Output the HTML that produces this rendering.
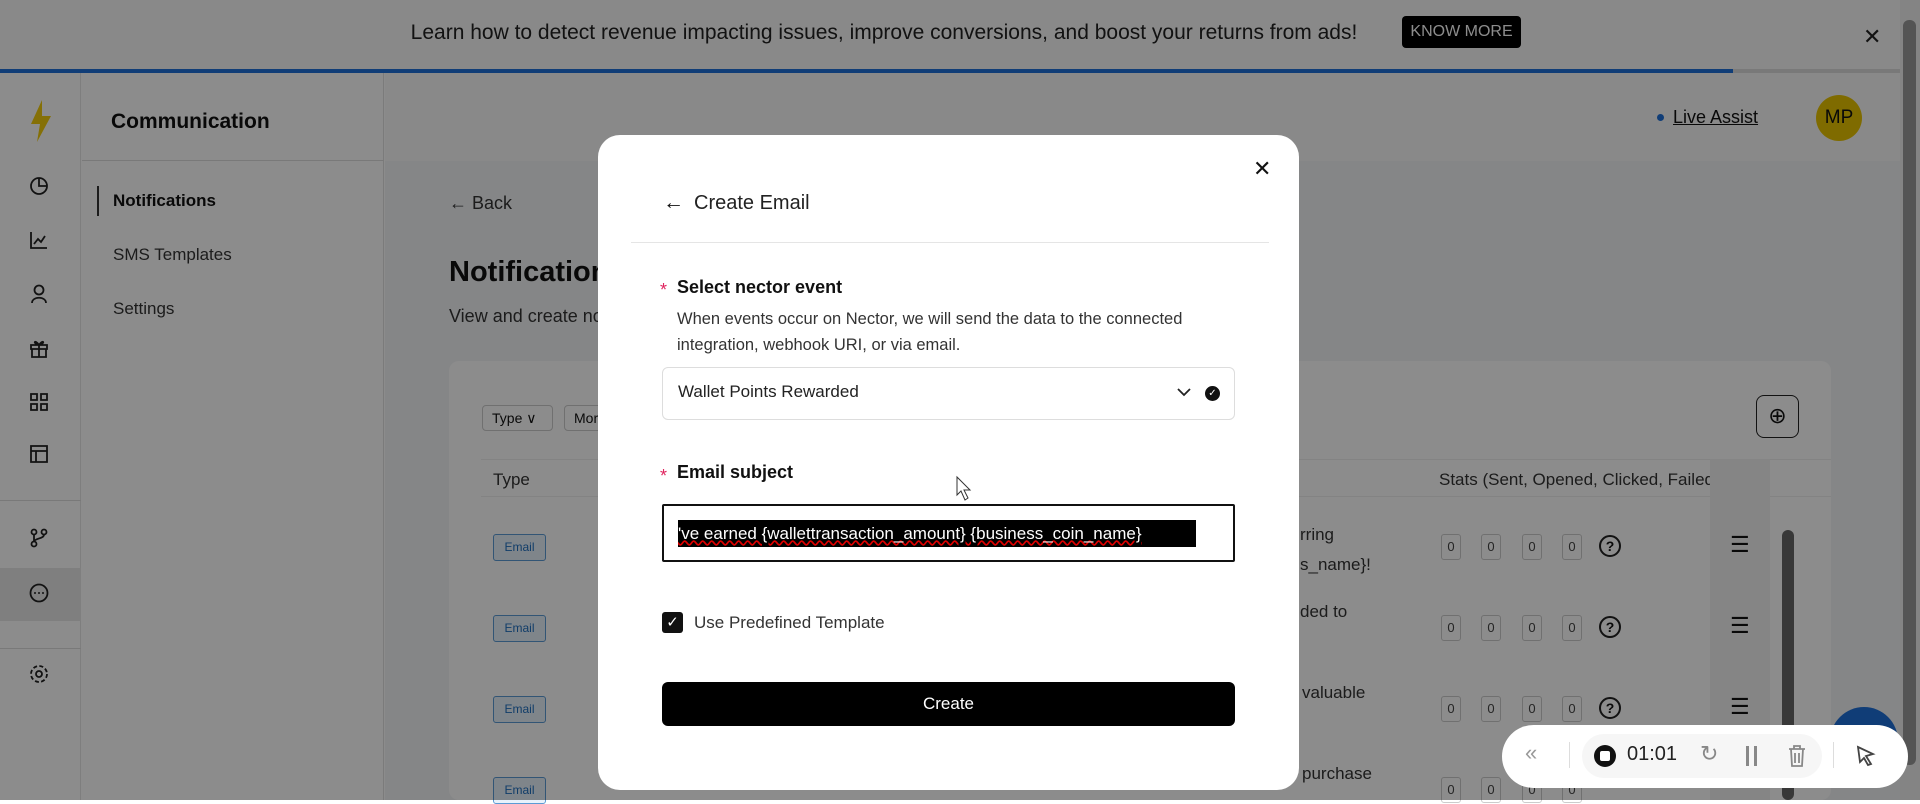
<!DOCTYPE html>
<html><head><meta charset="utf-8"><style>
*{box-sizing:border-box;margin:0;padding:0}
body{width:1920px;height:800px;overflow:hidden;position:relative;font-family:"Liberation Sans",sans-serif;background:#fff;color:#111}
.a{position:absolute}
.ov{position:absolute;left:0;top:0;width:1920px;height:800px;background:rgba(0,0,0,0.45)}
.sb{stroke:#222;fill:none;stroke-width:1.8}
.tag{position:absolute;left:493px;width:53px;height:27px;border:1px solid #5b9bd5;background:#e8f2fc;color:#1f6fbf;font-size:12px;text-align:center;line-height:25px;border-radius:3px}
.box{position:absolute;width:20px;height:26px;border:1px solid #ccc;border-radius:3px;font-size:13px;text-align:center;line-height:24px;color:#444}
</style></head><body>
<div class="a" style="left:0;top:0;width:1920px;height:70px;background:#fafafa"></div>
<div class="a" style="left:0;top:21px;width:1920px;text-align:center;font-size:21px;color:#222;padding-right:152px">Learn how to detect revenue impacting issues, improve conversions, and boost your returns from ads!</div>
<div class="a" style="left:1402px;top:16px;width:119px;height:32px;background:#000;color:#fff;border-radius:4px;font-size:16px;text-align:center;line-height:32px">KNOW MORE</div>
<div class="a" style="left:1863px;top:24px;font-size:22px;color:#222">✕</div>
<div class="a" style="left:0;top:69px;width:1733px;height:4px;background:#1e6fd9"></div>
<div class="a" style="left:1733px;top:69px;width:167px;height:4px;background:#ddd"></div>
<div class="a" style="left:0;top:73px;width:81px;height:727px;background:#fff;border-right:1px solid #e5e5e5"></div>
<svg class="a" style="left:28px;top:100px" width="26" height="42" viewBox="0 0 26 42"><path d="M14 0 L3 24 L12 24 L9 42 L23 16 L14 16 Z" fill="#f2cc0c"/></svg>
<svg class="a" style="left:28px;top:175px" width="22" height="22" viewBox="0 0 22 22"><circle cx="11" cy="11" r="8" class="sb"/><path d="M11 3 V11 H19" class="sb"/></svg>
<svg class="a" style="left:29px;top:230px" width="20" height="20"><path d="M2 2 V18 H18 M5 14 L9 9 L12 12 L16 6" class="sb"/></svg>
<svg class="a" style="left:29px;top:284px" width="20" height="20"><circle cx="10" cy="6" r="4.5" class="sb"/><path d="M3 19 C3 12 17 12 17 19" class="sb"/></svg>
<svg class="a" style="left:29px;top:338px" width="20" height="20"><path d="M2 7 H18 V11 H2 Z M3 11 V19 H17 V11 M10 7 V19 M10 7 C6 1 3 5 10 7 C14 1 17 5 10 7" class="sb"/></svg>
<svg class="a" style="left:29px;top:392px" width="20" height="20"><path d="M2 2 H8 V8 H2 Z M12 2 H18 V8 H12 Z M2 12 H8 V18 H2 Z M12 12 H18 V18 H12 Z" class="sb"/></svg>
<svg class="a" style="left:29px;top:444px" width="20" height="20"><path d="M2 2 H18 V18 H2 Z M2 7 H18 M7 7 V18" class="sb"/></svg>
<div class="a" style="left:0;top:500px;width:81px;height:1px;background:#ddd"></div>
<svg class="a" style="left:29px;top:528px" width="20" height="20"><circle cx="5" cy="4" r="2.5" class="sb"/><circle cx="5" cy="16" r="2.5" class="sb"/><circle cx="15" cy="4" r="2.5" class="sb"/><path d="M5 6.5 V13.5 M15 6.5 C15 11 6 10 5 13.5" class="sb"/></svg>
<div class="a" style="left:0;top:568px;width:81px;height:53px;background:#e8e8e8"></div>
<svg class="a" style="left:28px;top:582px" width="22" height="22"><circle cx="11" cy="11" r="8.5" class="sb"/><circle cx="7" cy="11" r="1" fill="#222"/><circle cx="11" cy="11" r="1" fill="#222"/><circle cx="15" cy="11" r="1" fill="#222"/></svg>
<div class="a" style="left:0;top:648px;width:81px;height:1px;background:#ddd"></div>
<svg class="a" style="left:28px;top:663px" width="22" height="22"><circle cx="11" cy="11" r="3" class="sb"/><circle cx="11" cy="11" r="8" class="sb" stroke-dasharray="4 2.3"/></svg>
<div class="a" style="left:82px;top:73px;width:302px;height:727px;background:#fff;border-right:1px solid #e0e0e0"></div>
<div class="a" style="left:82px;top:160px;width:302px;height:1px;background:#ddd"></div>
<div class="a" style="left:111px;top:110px;font-size:21px;font-weight:bold">Communication</div>
<div class="a" style="left:97px;top:186px;width:2px;height:30px;background:#333"></div>
<div class="a" style="left:113px;top:191px;font-size:17px;font-weight:bold">Notifications</div>
<div class="a" style="left:113px;top:245px;font-size:17px;color:#333">SMS Templates</div>
<div class="a" style="left:113px;top:299px;font-size:17px;color:#333">Settings</div>
<div class="a" style="left:385px;top:73px;width:1515px;height:88px;background:#fafafa"></div>
<div class="a" style="left:1657px;top:114px;width:7px;height:7px;border-radius:50%;background:#1e6fd9"></div>
<div class="a" style="left:1673px;top:107px;font-size:18px;text-decoration:underline">Live Assist</div>
<div class="a" style="left:1816px;top:95px;width:46px;height:46px;border-radius:50%;background:#e8c300;font-size:19px;text-align:center;line-height:46px">MP</div>
<div class="a" style="left:385px;top:161px;width:1515px;height:639px;background:#f3f4f6"></div>
<div class="a" style="left:449px;top:193px;font-size:18px;color:#333">← Back</div>
<div class="a" style="left:449px;top:256px;font-size:29px;font-weight:bold">Notifications</div>
<div class="a" style="left:449px;top:306px;font-size:18px;color:#333">View and create notifications for your customers. Send email, sms and webhooks.</div>
<div class="a" style="left:449px;top:361px;width:1382px;height:439px;background:#fff;border-radius:10px"></div>
<div class="a" style="left:482px;top:405px;width:71px;height:26px;border:1px solid #ccc;border-radius:4px;font-size:14px;line-height:24px;padding-left:9px">Type ∨</div>
<div class="a" style="left:564px;top:405px;width:60px;height:26px;border:1px solid #ccc;border-radius:4px;font-size:14px;line-height:24px;padding-left:9px">More</div>
<div class="a" style="left:1756px;top:395px;width:43px;height:43px;border:1.5px solid #222;border-radius:8px;font-size:22px;text-align:center;line-height:40px">⊕</div>
<div class="a" style="left:481px;top:459px;width:1350px;height:1px;background:#eee"></div>
<div class="a" style="left:493px;top:470px;font-size:17px;color:#333">Type</div>
<div class="a" style="left:1439px;top:470px;font-size:17px;color:#333;width:272px;overflow:hidden;white-space:nowrap">Stats (Sent, Opened, Clicked, Failed)</div>
<div class="a" style="left:481px;top:496px;width:1350px;height:1px;background:#eee"></div>
<div class="a" style="left:1710px;top:459px;width:60px;height:341px;background:#f3f3f3"></div>
<div class="a" style="left:1782px;top:530px;width:12px;height:270px;background:#666;border-radius:6px"></div>
<div class="tag" style="top:534px">Email</div><div class="tag" style="top:615px">Email</div><div class="tag" style="top:696px">Email</div><div class="tag" style="top:777px">Email</div>
<div class="a" style="left:1300px;top:520px;font-size:17px;color:#333;line-height:30px">rring<br>s_name}!</div>
<div class="a" style="left:1300px;top:602px;font-size:17px;color:#333">ded to</div>
<div class="a" style="left:1302px;top:683px;font-size:17px;color:#333">valuable</div>
<div class="a" style="left:1302px;top:764px;font-size:17px;color:#333">purchase</div>
<div class="box" style="left:1441px;top:534px">0</div><div class="box" style="left:1481px;top:534px">0</div><div class="box" style="left:1522px;top:534px">0</div><div class="box" style="left:1562px;top:534px">0</div>
<div class="box" style="left:1441px;top:615px">0</div><div class="box" style="left:1481px;top:615px">0</div><div class="box" style="left:1522px;top:615px">0</div><div class="box" style="left:1562px;top:615px">0</div>
<div class="box" style="left:1441px;top:696px">0</div><div class="box" style="left:1481px;top:696px">0</div><div class="box" style="left:1522px;top:696px">0</div><div class="box" style="left:1562px;top:696px">0</div>
<div class="box" style="left:1441px;top:777px">0</div><div class="box" style="left:1481px;top:777px">0</div><div class="box" style="left:1522px;top:777px">0</div><div class="box" style="left:1562px;top:777px">0</div>
<div class="a" style="left:1599px;top:535px;width:22px;height:22px;border:2px solid #222;border-radius:50%;font-size:14px;font-weight:bold;text-align:center;line-height:18px">?</div>
<div class="a" style="left:1599px;top:616px;width:22px;height:22px;border:2px solid #222;border-radius:50%;font-size:14px;font-weight:bold;text-align:center;line-height:18px">?</div>
<div class="a" style="left:1599px;top:697px;width:22px;height:22px;border:2px solid #222;border-radius:50%;font-size:14px;font-weight:bold;text-align:center;line-height:18px">?</div>
<div class="a" style="left:1730px;top:532px;font-size:22px">☰</div><div class="a" style="left:1730px;top:613px;font-size:22px">☰</div><div class="a" style="left:1730px;top:694px;font-size:22px">☰</div>
<div class="a" style="left:1900px;top:0;width:20px;height:800px;background:#f1f1f1"></div>
<div class="a" style="left:1903px;top:20px;width:13px;height:745px;background:#999;border-radius:6px"></div>
<div class="a" style="left:1830px;top:707px;width:68px;height:68px;border-radius:50%;background:#1e6fd9"></div>
<div class="ov"></div>
<div class="a" style="left:598px;top:135px;width:701px;height:655px;background:#fff;border-radius:22px"></div>
<div class="a" style="left:1253px;top:156px;font-size:22px">✕</div>
<div class="a" style="left:663px;top:191px;font-size:21px">←</div>
<div class="a" style="left:694px;top:192px;font-size:20px;color:#222">Create Email</div>
<div class="a" style="left:631px;top:242px;width:638px;height:1px;background:#e5e5e5"></div>
<div class="a" style="left:660px;top:280px;color:#e0245e;font-size:18px">*</div>
<div class="a" style="left:677px;top:277px;font-size:18px;font-weight:bold">Select nector event</div>
<div class="a" style="left:677px;top:306px;font-size:16.5px;color:#333;line-height:26px;width:560px">When events occur on Nector, we will send the data to the connected integration, webhook URI, or via email.</div>
<div class="a" style="left:662px;top:367px;width:573px;height:53px;border:1px solid #ddd;border-radius:6px"></div>
<div class="a" style="left:678px;top:382px;font-size:17px;color:#222">Wallet Points Rewarded</div>
<svg class="a" style="left:1176px;top:386px" width="16" height="12"><path d="M2 3 L8 9 L14 3" class="sb"/></svg>
<div class="a" style="left:1205px;top:386px;width:15px;height:15px;border-radius:50%;background:#111;color:#fff;font-size:10px;text-align:center;line-height:15px">✓</div>
<div class="a" style="left:660px;top:466px;color:#e0245e;font-size:18px">*</div>
<div class="a" style="left:677px;top:462px;font-size:18px;font-weight:bold">Email subject</div>
<div class="a" style="left:662px;top:504px;width:573px;height:58px;border:2px solid #111;border-radius:2px"></div>
<div class="a" style="left:678px;top:520px;width:518px;height:27px;background:#000;color:#fff;font-size:17px;line-height:27px;white-space:nowrap;overflow:hidden;text-decoration:underline wavy #d00">'ve earned {wallettransaction_amount} {business_coin_name}</div>
<div class="a" style="left:662px;top:612px;width:21px;height:21px;background:#111;border-radius:3px;color:#fff;font-size:15px;text-align:center;line-height:21px">✓</div>
<div class="a" style="left:694px;top:613px;font-size:17px;color:#333">Use Predefined Template</div>
<div class="a" style="left:662px;top:682px;width:573px;height:44px;background:#000;border-radius:6px;color:#fff;font-size:17px;text-align:center;line-height:44px">Create</div>
<svg class="a" style="left:955px;top:475px" width="20" height="28"><path d="M2 2 L2 20 L6 16 L10 25 L13 23 L9 15 L15 15 Z" fill="#fff" stroke="#333" stroke-width="1"/></svg>
<div class="a" style="left:1502px;top:725px;width:406px;height:63px;background:#fff;border-radius:32px"></div>
<div class="a" style="left:1525px;top:740px;font-size:22px;color:#999">«</div>
<div class="a" style="left:1569px;top:742px;width:1px;height:26px;background:#ddd"></div>
<div class="a" style="left:1582px;top:734px;width:240px;height:44px;background:#f6f6f6;border-radius:22px"></div>
<div class="a" style="left:1594px;top:745px;width:22px;height:22px;border-radius:50%;background:#111"></div>
<div class="a" style="left:1600px;top:751px;width:10px;height:10px;background:#fff;border-radius:2px"></div>
<div class="a" style="left:1627px;top:743px;font-size:20px;color:#222">01:01</div>
<div class="a" style="left:1700px;top:741px;font-size:22px;color:#888">↻</div>
<div class="a" style="left:1746px;top:746px;width:3px;height:20px;background:#888"></div><div class="a" style="left:1754px;top:746px;width:3px;height:20px;background:#888"></div>
<svg class="a" style="left:1788px;top:745px" width="18" height="22"><path d="M1 4 H17 M6 4 V1 H12 V4 M3 4 L4 21 H14 L15 4 M7 8 V18 M11 8 V18" stroke="#888" stroke-width="1.8" fill="none"/></svg>
<div class="a" style="left:1833px;top:742px;width:1px;height:26px;background:#ddd"></div>
<svg class="a" style="left:1855px;top:744px" width="22" height="24"><path d="M3 3 L18 10 L11 12 L16 20 L13 21 L9 14 L5 18 Z" fill="none" stroke="#444" stroke-width="1.8"/></svg>
</body></html>
